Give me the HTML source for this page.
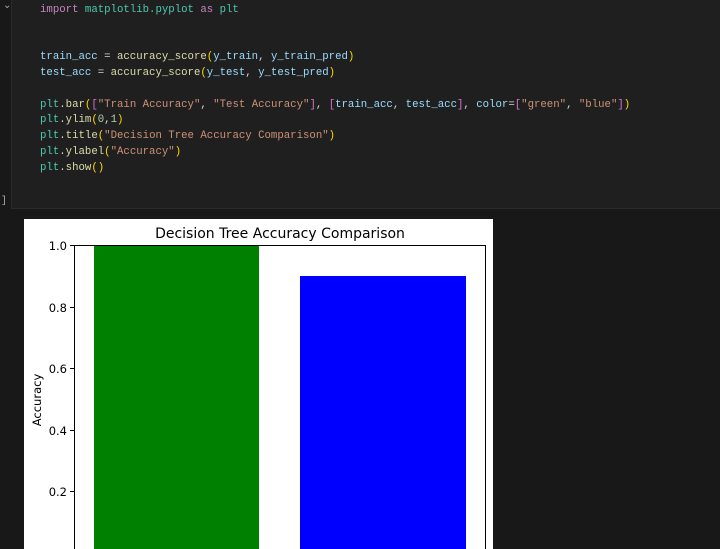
<!DOCTYPE html>
<html><head><style>
body{margin:0;width:720px;height:543px;background:#181818;overflow:hidden;position:relative;font-family:"Liberation Mono",monospace}
.cell{position:absolute;left:11px;top:-2px;width:712px;height:211px;background:#1f1f1f;border:1px solid #2b2b2b;box-sizing:border-box}
.code{position:absolute;left:40px;top:3px;font-size:10.7px;line-height:15.75px;color:#d4d4d4;white-space:pre}
.k{color:#c586c0}.m{color:#4ec9b0}.v{color:#9cdcfe}.f{color:#dcdcaa}.s{color:#ce9178}.n{color:#b5cea8}.y{color:#ffd700}.p{color:#da70d6}.b{color:#179fff}
</style></head><body>
<div style="position:absolute;left:3px;top:0;color:#aaa;font-size:10px;font-family:'Liberation Sans',sans-serif">⌄</div>
<div style="position:absolute;left:1px;top:196px;color:#aaa;font-size:10px">]</div>
<div class="cell"></div>
<div class="code"><span class="k">import</span> <span class="m">matplotlib.pyplot</span> <span class="k">as</span> <span class="m">plt</span>


<span class="v">train_acc</span> = <span class="f">accuracy_score</span><span class="y">(</span><span class="v">y_train</span>, <span class="v">y_train_pred</span><span class="y">)</span>
<span class="v">test_acc</span> = <span class="f">accuracy_score</span><span class="y">(</span><span class="v">y_test</span>, <span class="v">y_test_pred</span><span class="y">)</span>

<span class="m">plt</span>.<span class="f">bar</span><span class="y">(</span><span class="p">[</span><span class="s">"Train Accuracy"</span>, <span class="s">"Test Accuracy"</span><span class="p">]</span>, <span class="p">[</span><span class="v">train_acc</span>, <span class="v">test_acc</span><span class="p">]</span>, <span class="v">color</span>=<span class="p">[</span><span class="s">"green"</span>, <span class="s">"blue"</span><span class="p">]</span><span class="y">)</span>
<span class="m">plt</span>.<span class="f">ylim</span><span class="y">(</span><span class="n">0</span>,<span class="n">1</span><span class="y">)</span>
<span class="m">plt</span>.<span class="f">title</span><span class="y">(</span><span class="s">"Decision Tree Accuracy Comparison"</span><span class="y">)</span>
<span class="m">plt</span>.<span class="f">ylabel</span><span class="y">(</span><span class="s">"Accuracy"</span><span class="y">)</span>
<span class="m">plt</span>.<span class="f">show</span><span class="y">()</span></div>
<svg style="position:absolute;left:24px;top:219px" width="469" height="330" font-family="DejaVu Sans, sans-serif">
<rect width="469" height="330" fill="#fff"/>
<rect x="70" y="26" width="165" height="310" fill="#008000"/>
<rect x="276" y="57" width="166" height="280" fill="#0000ff"/>
<rect x="50.5" y="26.5" width="411" height="320" fill="none" stroke="#000" stroke-width="1"/>
<g stroke="#000"><line x1="46" x2="50" y1="26.5" y2="26.5"/><line x1="46" x2="50" y1="88.5" y2="88.5"/><line x1="46" x2="50" y1="149.5" y2="149.5"/><line x1="46" x2="50" y1="211.5" y2="211.5"/><line x1="46" x2="50" y1="272.5" y2="272.5"/></g>
<g font-size="11.5" text-anchor="end" fill="#000"><text x="43" y="31">1.0</text><text x="43" y="93">0.8</text><text x="43" y="154">0.6</text><text x="43" y="216">0.4</text><text x="43" y="277">0.2</text></g>
<text x="256" y="19" font-size="14" text-anchor="middle">Decision Tree Accuracy Comparison</text>
<text transform="translate(17,181) rotate(-90)" font-size="11.5" text-anchor="middle">Accuracy</text>
</svg>
</body></html>
